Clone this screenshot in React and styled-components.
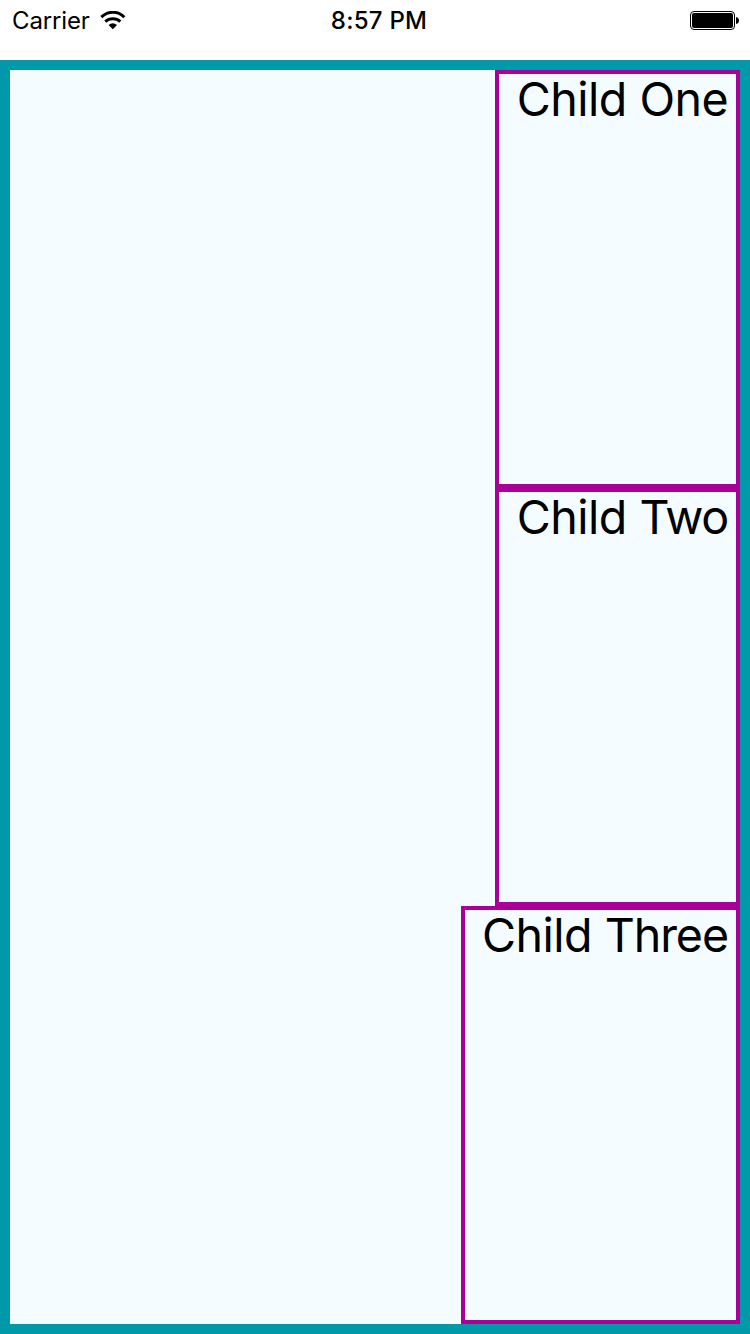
import React from "react";
import styled, { createGlobalStyle } from "styled-components";

const Global = createGlobalStyle`
  * { box-sizing: border-box; }
  body { margin: 0; background: #fff; font-family: Inter, "Liberation Sans", sans-serif; color: #000; }
`;

const Screen = styled.div`
  width: 750px;
  height: 1334px;
  display: flex;
  flex-direction: column;
`;

const StatusBar = styled.header`
  height: 60px;
  flex: none;
  display: grid;
  grid-template-columns: 1fr auto 1fr;
  align-items: start;
  padding: 1px 10px 0 12px;
  line-height: 40px;
  font-size: 24px;
`;

const Carrier = styled.div`
  display: flex;
  align-items: center;
  height: 40px;
  gap: 10px;
  letter-spacing: -0.15px;
`;

const Time = styled.div`
  font-weight: 550;
  letter-spacing: 0.25px;
  padding-left: 6px;
`;

const Battery = styled.div`
  display: flex;
  align-items: center;
  justify-content: flex-end;
  height: 40px;
`;

const Container = styled.main`
  flex: 1;
  border: 10px solid #0099aa;
  background: #f5fcff;
  display: flex;
  flex-direction: column;
  align-items: flex-end;
`;

const Child = styled.section`
  flex: 1;
  width: ${(p) => p.$width}px;
  border: 4px solid #aa0099;
  padding-right: 8px;
  text-align: right;
  font-size: 46.6px;
  line-height: 51px;
  letter-spacing: -0.5px;
  white-space: nowrap;
`;

const Word = styled.span`
  letter-spacing: ${(p) => p.$tracking}px;
`;

const items = [
  { word: "One", tracking: -0.6, width: 245 },
  { word: "Two", tracking: -1.3, width: 245 },
  { word: "Three", tracking: -1.1, width: 279 },
];

export default function App() {
  return (
    <Screen>
      <Global />
      <StatusBar>
        <Carrier>
          <span>Carrier</span>
          <svg width="26" height="20" viewBox="0 0 26 20">
            <path d="M1.300 6.200C8-.300 18-.300 24.300 6.200M5.300 10.600C9.500 6.800 16.300 6.800 20.300 10.600" fill="none" stroke="#000" strokeWidth="3" />
            <path d="M8.600 14Q12.800 10.500 17 14L12.800 18.200Z" />
          </svg>
        </Carrier>
        <Time>8:57 PM</Time>
        <Battery>
          <svg width="50" height="20" viewBox="0 0 50 20">
            <rect x="0.500" y="0.500" width="44" height="18" rx="3.500" fill="none" stroke="#000" />
            <rect x="2" y="2" width="41" height="15" rx="2" />
            <path d="M46 6Q49 6.500 49 9.500T46 13Z" />
          </svg>
        </Battery>
      </StatusBar>
      <Container>
        {items.map((item) => (
          <Child key={item.word} $width={item.width}>
            Child <Word $tracking={item.tracking}>{item.word}</Word>
          </Child>
        ))}
      </Container>
    </Screen>
  );
}
